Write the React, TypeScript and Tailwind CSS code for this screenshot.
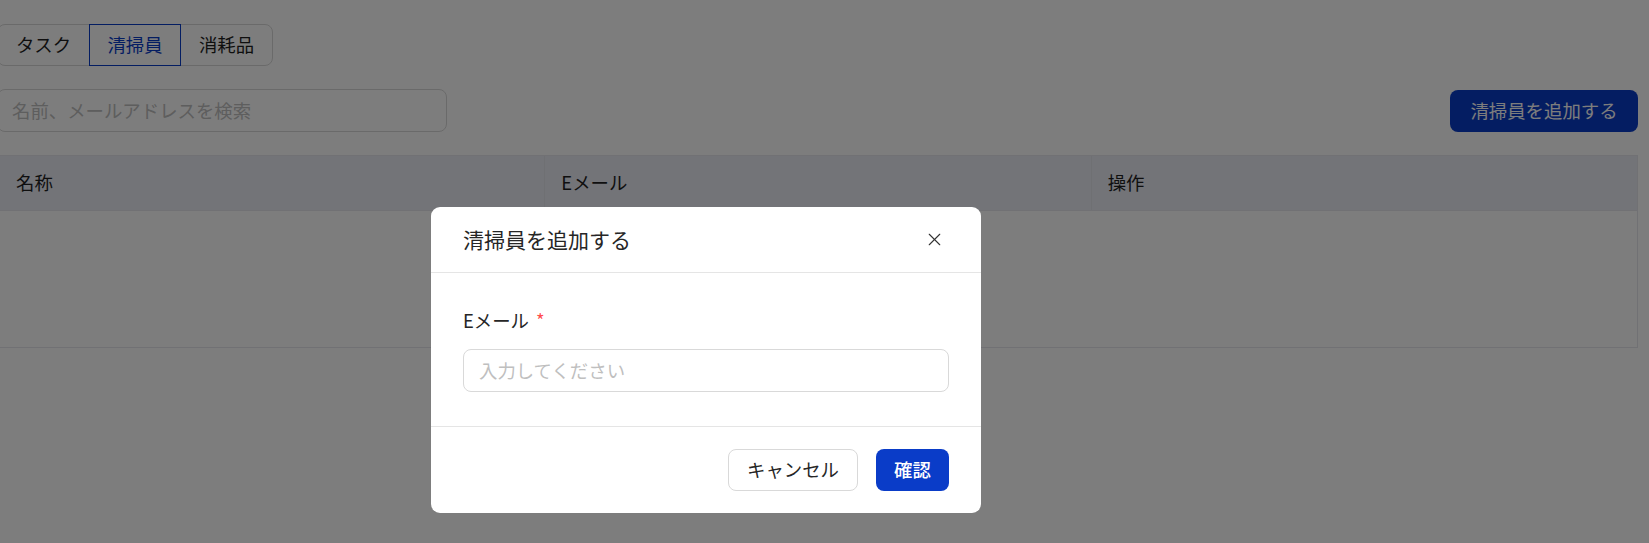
import { X } from 'lucide-react'

const font = { fontFamily: '"Noto Sans CJK JP", "Noto Sans", sans-serif' }

export default function App() {
  const tabs = ['タスク', '清掃員', '消耗品']
  const active = 1

  return (
    <div className="relative h-[543px] w-[1649px] overflow-hidden bg-white text-[#1f1f1f]" style={font}>
      <div className="-ml-[3px] w-[1641px] pt-[24px]">
        {/* tabs */}
        <div className="inline-flex h-[42px] rounded-[8px] border border-[#d9d9d9] text-[18.4px]">
          {tabs.map((t, i) => (
            <div
              key={t}
              className={
                i === active
                  ? '-my-px flex w-[92px] items-center justify-center border border-[#0a3cc8] text-[#0a3cc8]'
                  : 'flex w-[91px] items-center justify-center'
              }
            >
              {t}
            </div>
          ))}
        </div>

        {/* search + add */}
        <div className="mt-[23px] flex items-center justify-between">
          <div className="flex h-[43px] w-[450px] items-center rounded-[8px] border border-[#d9d9d9] px-[14px] text-[18.4px] text-[#bfbfbf]">
            名前、メールアドレスを検索
          </div>
          <button className="h-[42px] w-[188px] rounded-[8px] bg-[#0a3cc8] text-[18.4px] text-white">
            清掃員を追加する
          </button>
        </div>

        {/* table */}
        <div className="mt-[23px] border border-[#e6e7ec]">
          <div className="grid h-[55px] grid-cols-3 border-b border-[#e6e7ec] bg-[#eaecf5] text-[18.4px]">
            <div className="flex items-center pl-[18px]">名称</div>
            <div className="flex items-center border-l border-[#e3e4ea] pl-[16px]">Eメール</div>
            <div className="flex items-center border-l border-[#e3e4ea] pl-[16px]">操作</div>
          </div>
          <div className="h-[136px]" />
        </div>
      </div>

      {/* mask */}
      <div className="absolute inset-0 bg-black/[0.51]" />

      {/* modal */}
      <div className="absolute left-[431px] top-[207px] w-[550px] rounded-[9px] bg-white">
        <div className="flex h-[66px] items-center justify-between border-b border-[#e5e5e5] pl-[32px] pr-[36px]">
          <span className="text-[21px] text-[#262626]">清掃員を追加する</span>
          <X size={21} strokeWidth={1.3} className="text-[#333]" />
        </div>
        <div className="px-[32px] pb-[34px] pt-[34px]">
          <div className="flex h-[28px] items-center text-[18.4px] text-[#262626]">
            Eメール<span className="ml-[7px] text-[#ff4d4f]">*</span>
          </div>
          <div className="mt-[14px] flex h-[43px] items-center rounded-[8px] border border-[#d9d9d9] px-[15px] text-[18.4px] text-[#bfbfbf]">
            入力してください
          </div>
        </div>
        <div className="flex h-[87px] items-center justify-end gap-[18px] border-t border-[#e5e5e5] px-[32px]">
          <button className="h-[42px] w-[130px] rounded-[8px] border border-[#d9d9d9] text-[18.4px] text-[#262626]">
            キャンセル
          </button>
          <button className="h-[42px] w-[73px] rounded-[8px] bg-[#0a3cc8] text-[18.4px] font-medium text-white">
            確認
          </button>
        </div>
      </div>
    </div>
  )
}
